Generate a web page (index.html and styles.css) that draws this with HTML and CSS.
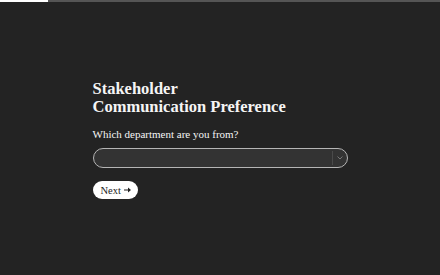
FILE: index.html
```html
<!DOCTYPE html>
<html lang="en">
<head>
  <meta charset="UTF-8">
  <meta name="viewport" content="width=device-width, initial-scale=1.0">
  <title>Stakeholder Communication Preference</title>
  <link rel="stylesheet" href="styles.css">
</head>
<body>
  <!-- Progress -->
  <div class="progress">
    <div class="progress-fill" style="width: 11%"></div>
  </div>

  <div class="page">
    <div class="form">
      <h1>Stakeholder<br>Communication Preference</h1>
      <p class="question">Which department are you from?</p>

      <div class="select">
        <span class="select-value"></span>
        <span class="select-arrow">
          <svg width="6" height="4" viewBox="0 0 6 4"><path d="M0.5 0.5 L3 3 L5.5 0.5" fill="none" stroke="#777" stroke-width="1"/></svg>
        </span>
      </div>

      <button class="btn-next">Next
        <svg class="arrow" width="7" height="6" viewBox="0 0 7 6"><path d="M0 2.4 H4 V0.6 L7 3 L4 5.4 V3.6 H0 Z" fill="#222"/></svg>
      </button>
    </div>
  </div>
</body>
</html>
```

FILE: styles.css
```css
* {
  margin: 0;
  padding: 0;
  box-sizing: border-box;
}

body {
  width: 440px;
  height: 275px;
  background: #232323;
  color: #f5f5f5;
  font-family: "Liberation Serif", "Times New Roman", serif;
  overflow: hidden;
}

.progress {
  height: 2px;
  background: #555;
}

.progress-fill {
  height: 100%;
  background: #fff;
}

.page {
  padding-top: 78px;
  display: flex;
  justify-content: center;
}

.form {
  width: 255px;
}

h1 {
  font-size: 16.5px;
  font-weight: 700;
  line-height: 18px;
  margin-bottom: 11px;
}

.question {
  font-size: 11px;
  line-height: 14px;
  margin-bottom: 7px;
}

.select {
  height: 20px;
  border: 1px solid #b5b5b5;
  border-radius: 10px;
  background: #333;
  display: flex;
  align-items: center;
  justify-content: flex-end;
  margin-bottom: 13px;
}

.select-arrow {
  height: 14px;
  width: 15px;
  border-left: 1px solid #4a4a4a;
  display: flex;
  align-items: center;
  justify-content: center;
}

.btn-next {
  font-family: inherit;
  font-size: 10.5px;
  color: #222;
  background: #fff;
  border: none;
  border-radius: 10px;
  height: 18px;
  padding: 0 7px 0 8px;
  display: flex;
  align-items: center;
  gap: 3px;
}
```
